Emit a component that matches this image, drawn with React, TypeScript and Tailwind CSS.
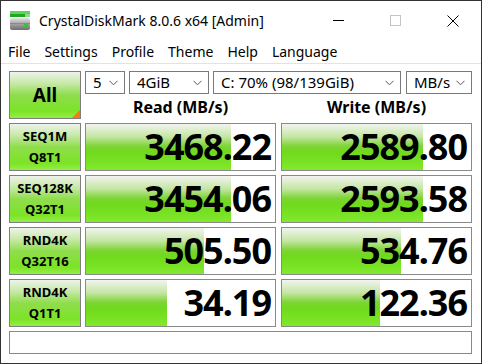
import React from "react";

const FONT = { fontFamily: '"Noto Sans", "Liberation Sans", sans-serif' };

const ROWS = [
  { a: "SEQ1M", b: "Q8T1", read: "3468.22", write: "2589.80", rw: 145, ww: 141 },
  { a: "SEQ128K", b: "Q32T1", read: "3454.06", write: "2593.58", rw: 145, ww: 141 },
  { a: "RND4K", b: "Q32T16", read: "505.50", write: "534.76", rw: 118, ww: 119 },
  { a: "RND4K", b: "Q1T1", read: "34.19", write: "122.36", rw: 81, ww: 98 },
];

const MENU = ["File", "Settings", "Profile", "Theme", "Help", "Language"];

function AppIcon() {
  return (
    <svg width="20" height="20" viewBox="0 0 20 20">
      <defs>
        <linearGradient id="disk" x1="0" y1="0" x2="0" y2="1">
          <stop offset="0" stopColor="#e4e4e4" />
          <stop offset="0.45" stopColor="#a8a8a8" />
          <stop offset="1" stopColor="#6e6e6e" />
        </linearGradient>
      </defs>
      <rect x="0" y="0" width="20" height="3" fill="#5fd35f" />
      <rect x="0" y="3" width="15" height="3" fill="#1fa81f" />
      <rect x="15" y="3" width="5" height="3" fill="#8fd98f" />
      <rect x="0" y="7" width="20" height="12" rx="2" fill="url(#disk)" />
      <rect x="0" y="12" width="20" height="1" fill="#8a8a8a" />
      <rect x="14" y="13" width="4" height="3" fill="#36c436" />
    </svg>
  );
}

function Chevron() {
  return (
    <svg width="9" height="6" viewBox="0 0 9 6" className="shrink-0">
      <path d="M0.5 0.8 L4.5 4.8 L8.5 0.8" fill="none" stroke="#555" strokeWidth="1" />
    </svg>
  );
}

function Select({ label, w }: { label: string; w: string }) {
  return (
    <div className={`flex h-[23px] ${w} items-center justify-between border border-[#7a7a7a] bg-white pl-[7px] pr-[6px] text-[15px] text-black`}>
      <span className="leading-none">{label}</span>
      <Chevron />
    </div>
  );
}

function Label({ a, b }: { a: string; b: string }) {
  return (
    <div className="flex h-[48px] w-[72px] flex-col items-center justify-center border border-[#7f7f7f] bg-[linear-gradient(to_bottom,#eef3ea_0%,#c6e9a6_25%,#8fdd4c_50%,#7ce326_85%,#94ee46_100%)] text-[13px] font-bold leading-[21px] text-black">
      <span>{a}</span>
      <span>{b}</span>
    </div>
  );
}

function Cell({ value, fill }: { value: string; fill: number }) {
  return (
    <div className="relative h-[48px] w-[191px] border border-[#8a8a8a] bg-white">
      <div
        className="absolute bottom-0 left-0 top-0 bg-[linear-gradient(to_bottom,#f2f4f0_0%,#c4e6a2_28%,#7fd438_48%,#6fd91c_60%,#82e92c_100%)]"
        style={{ width: fill }}
      />
      <div className="relative flex h-full items-center justify-end pr-[4px] text-[36px] font-bold leading-none tracking-[-1px] text-black">
        {value}
      </div>
    </div>
  );
}

export default function App() {
  return (
    <div className="flex h-[364px] w-[482px] flex-col overflow-hidden border border-[#333] bg-white" style={FONT}>
      {/* Title bar */}
      <div className="flex h-[39px] shrink-0 items-center">
        <div className="ml-[9px] mt-[1px]">
          <AppIcon />
        </div>
        <span className="ml-[9px] text-[14px] text-black">CrystalDiskMark 8.0.6 x64 [Admin]</span>
        <div className="ml-auto flex h-full items-center">
          <div className="flex h-full w-[57px] items-center justify-center">
            <div className="h-px w-[11px] bg-black" />
          </div>
          <div className="flex h-full w-[57px] items-center justify-center">
            <div className="h-[11px] w-[11px] border border-[#c4c4c4]" />
          </div>
          <div className="flex h-full w-[57px] items-center justify-center">
            <svg width="12" height="12" viewBox="0 0 12 12">
              <path d="M0.5 0.5 L11.5 11.5 M11.5 0.5 L0.5 11.5" stroke="#000" strokeWidth="1" />
            </svg>
          </div>
        </div>
      </div>

      {/* Menu */}
      <div className="flex h-[23px] shrink-0 items-center text-[14px] text-black">
        {MENU.map((m) => (
          <span key={m} className="px-[7px]">
            {m}
          </span>
        ))}
      </div>
      <div className="h-px shrink-0 bg-[#e3e3e3]" />

      {/* Client */}
      <div className="flex flex-1 flex-col gap-[4px] pl-[8px] pt-[7px]">
        <div className="flex gap-[4px]">
          <div className="relative flex h-[48px] w-[72px] items-center justify-center border border-[#7f7f7f] bg-[linear-gradient(to_bottom,#eef3ea_0%,#c6e9a6_25%,#8fdd4c_50%,#7ce326_85%,#94ee46_100%)] text-[19px] font-bold text-black">
            All
            <div className="absolute bottom-0 right-0 h-0 w-0 border-b-[8px] border-l-[8px] border-b-[#f57a10] border-l-transparent" />
          </div>
          <div className="flex flex-col">
            <div className="flex gap-[4px]">
              <Select label="5" w="w-[40px]" />
              <Select label="4GiB" w="w-[80px]" />
              <Select label="C: 70% (98/139GiB)" w="w-[188px]" />
              <div className="ml-[1px]">
                <Select label="MB/s" w="w-[66px]" />
              </div>
            </div>
            <div className="flex flex-1 items-center gap-[5px] pt-[1px] text-[16px] font-bold text-black">
              <div className="w-[191px] text-center">Read (MB/s)</div>
              <div className="w-[191px] text-center">Write (MB/s)</div>
            </div>
          </div>
        </div>

        {ROWS.map((r) => (
          <div key={r.a + r.b} className="flex gap-[4px]">
            <Label a={r.a} b={r.b} />
            <div className="flex gap-[5px]">
              <Cell value={r.read} fill={r.rw} />
              <Cell value={r.write} fill={r.ww} />
            </div>
          </div>
        ))}

        <div className="h-[23px] w-[463px] border border-[#8a8a8a] bg-white" />
      </div>
    </div>
  );
}
